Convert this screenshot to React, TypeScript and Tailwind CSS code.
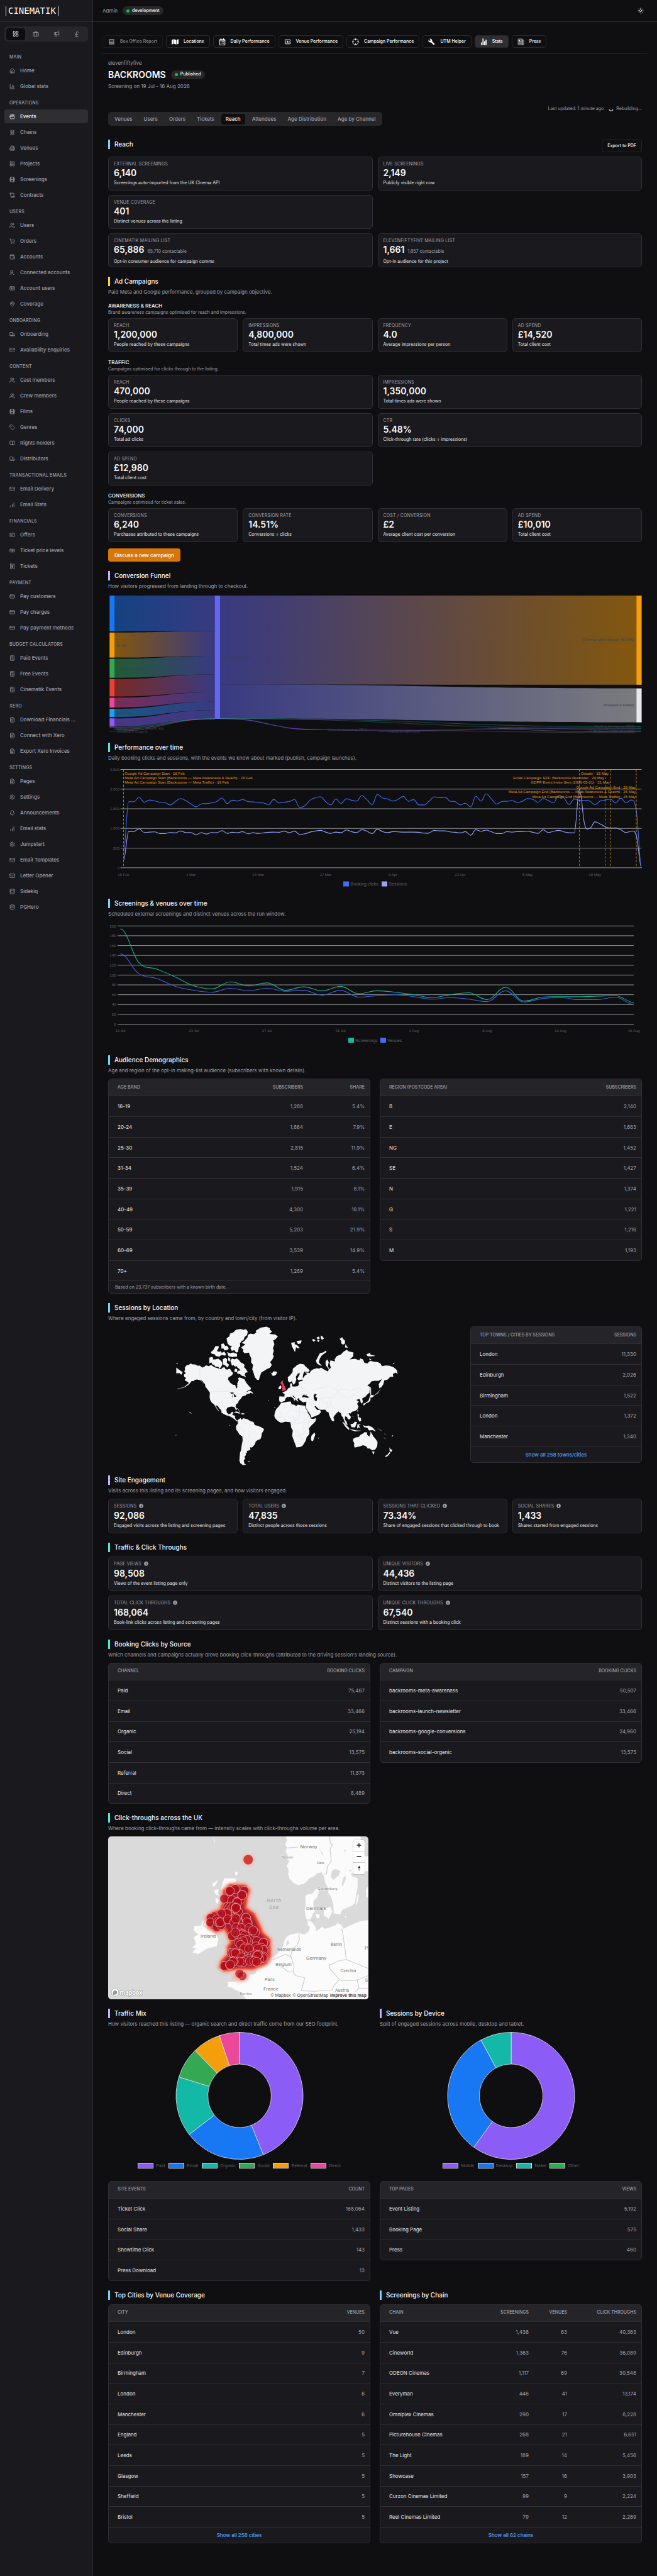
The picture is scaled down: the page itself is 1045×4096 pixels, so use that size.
import React from 'react'
import clsx from 'clsx'
import {
  Banknote, Bell, BookOpen, Briefcase, Building2, Calculator, ChartColumn, ChartNoAxesColumnIncreasing,
  Clapperboard, CreditCard, Crosshair, Database, FileText, Film, House, IdCard, Landmark, LayoutDashboard,
  LayoutGrid, Mail, MailCheck, MapPin, Megaphone, PoundSterling, Receipt, Scroll, Settings, ShoppingCart,
  Sun, Tag, TicketPercent, Truck, UserRoundCheck, Users, Wallet,
} from 'lucide-react'
import { FaInfoCircle, FaMap, FaRegCalendarAlt } from 'react-icons/fa'
import { IoNewspaperOutline, IoStatsChartSharp } from 'react-icons/io5'
import { MdBuild, MdOutlineLocalPlay, MdReceipt } from 'react-icons/md'

type Icon = React.ComponentType<{ className?: string }>

const NAV: { title: string, items: [string, Icon][] }[] = [
  { title: 'Main', items: [['Home', House], ['Global stats', ChartColumn]] },
  {
    title: 'Operations',
    items: [['Events', Clapperboard], ['Chains', Landmark], ['Venues', Building2], ['Projects', LayoutGrid], ['Screenings', Film], ['Contracts', Scroll]],
  },
  {
    title: 'Users',
    items: [['Users', Users], ['Orders', ShoppingCart], ['Accounts', Wallet], ['Connected accounts', UserRoundCheck], ['Account users', IdCard], ['Coverage', MapPin]],
  },
  { title: 'Onboarding', items: [['Onboarding', Truck], ['Availability Enquiries', MailCheck]] },
  {
    title: 'Content',
    items: [['Cast members', Users], ['Crew members', Users], ['Films', Film], ['Genres', Tag], ['Rights holders', BookOpen], ['Distributors', Truck]],
  },
  { title: 'Transactional emails', items: [['Email Delivery', Mail], ['Email Stats', ChartNoAxesColumnIncreasing]] },
  { title: 'Financials', items: [['Offers', TicketPercent], ['Ticket price levels', Banknote], ['Tickets', Receipt]] },
  { title: 'Payment', items: [['Pay customers', CreditCard], ['Pay charges', CreditCard], ['Pay payment methods', CreditCard]] },
  { title: 'Budget calculators', items: [['Paid Events', Calculator], ['Free Events', Calculator], ['Cinematik Events', Calculator]] },
  { title: 'Xero', items: [['Download Financials ...', FileText], ['Connect with Xero', FileText], ['Export Xero Invoices', FileText]] },
  {
    title: 'Settings',
    items: [['Pages', FileText], ['Settings', Settings], ['Announcements', Bell], ['Email stats', ChartNoAxesColumnIncreasing], ['Jumpstart', Settings], ['Email Templates', Mail], ['Letter Opener', Mail], ['Sidekiq', Database], ['PGHero', Database]],
  },
]

const SPACES: [string, Icon][] = [
  ['Dashboard', LayoutDashboard],
  ['Business', Briefcase],
  ['Marketing', Megaphone],
  ['Finance', PoundSterling],
]

const Sidebar = () => (
  <aside className="w-[148px] shrink-0 border-r border-[#2e2e33] bg-[#1a1a1e]">
    <div className="flex h-[35px] items-center gap-[3px] border-b border-[#2e2e33] pl-[9px]">
      <span className="h-[15px] w-px bg-zinc-100" />
      <span className="font-['DejaVu_Sans_Mono',monospace] text-[14px] leading-none text-zinc-50">CINEMATIK</span>
      <span className="h-[15px] w-px bg-zinc-100" />
    </div>
    <div className="mx-[7px] mt-[7px] flex h-[24px] items-center justify-between rounded-[5px] bg-[#27272a] p-[3px]">
      {SPACES.map(([name, Glyph], i) => (
        <button key={name} aria-label={name} className={clsx('flex h-[19px] w-[30px] items-center justify-center rounded-[4px]', i === 0 ? 'bg-[#0e0e10] text-zinc-50' : 'text-zinc-400')}>
          <Glyph className="size-[10px]" />
        </button>
      ))}
    </div>
    <nav className="px-[7px] pt-[19px]">
      {NAV.map((group) => (
        <div key={group.title} className="pb-[10px]">
          <h2 className="px-2 text-[7px] leading-[11px] font-medium tracking-wide text-zinc-400 uppercase">{group.title}</h2>
          <ul className="flex flex-col gap-[3px] pt-[5px]">
            {group.items.map(([label, Glyph]) => (
              <li key={label}>
                <a href="#" className={clsx('flex h-[22px] items-center gap-2 rounded-[4px] px-2 text-[8px] font-medium', label === 'Events' ? 'bg-[#2e2e33] text-zinc-100' : 'text-zinc-400')}>
                  <Glyph className="size-[9px] shrink-0" />
                  <span className="truncate">{label}</span>
                </a>
              </li>
            ))}
          </ul>
        </div>
      ))}
    </nav>
  </aside>
)

const Pill = ({ children }: { children: React.ReactNode }) => (
  <span className="flex h-[14px] items-center gap-1 rounded-full bg-[#27272a] px-[6px] text-[7px] font-medium text-zinc-50">
    <span className="size-[5px] rounded-full bg-green-500" />
    {children}
  </span>
)

const ACTIONS: [string, Icon][] = [
  ['Box Office Report', MdReceipt],
  ['Locations', FaMap],
  ['Daily Performance', FaRegCalendarAlt],
  ['Venue Performance', MdOutlineLocalPlay],
  ['Campaign Performance', Crosshair],
  ['UTM Helper', MdBuild],
  ['Stats', IoStatsChartSharp],
  ['Press', IoNewspaperOutline],
]

const TABS = ['Venues', 'Users', 'Orders', 'Tickets', 'Reach', 'Attendees', 'Age Distribution', 'Age by Channel']

const barColors = {
  sky: 'border-sky-300',
  amber: 'border-amber-300',
  violet: 'border-violet-300',
  teal: 'border-teal-300',
}

const Heading = ({ color, title, sub }: { color: keyof typeof barColors, title: string, sub?: string }) => (
  <div>
    <h2 className={clsx('border-l-[3px] pl-[7px] text-[10px] leading-[15px] font-medium text-zinc-50', barColors[color])}>{title}</h2>
    {sub && <p className="mt-[3px] text-[8px] leading-[12px] whitespace-nowrap text-zinc-400">{sub}</p>}
  </div>
)

const SubHeading = ({ title, sub }: { title: string, sub: string }) => (
  <div className="pt-[10px] pb-1">
    <h3 className="text-[8px] leading-[12px] font-medium text-zinc-50 uppercase">{title}</h3>
    <p className="text-[7px] leading-[10px] text-zinc-400">{sub}</p>
  </div>
)

type Stat = { label: string, value: string, note: string, extra?: string, info?: boolean }

const StatCard = ({ label, value, note, extra, info }: Stat) => (
  <div className={clsx('rounded-[5px] border border-[#2e2e33] bg-[#1a1a1e] px-2 pt-[6px]', info ? 'h-[55px]' : 'h-[54px]')}>
    <div className={clsx('flex items-center gap-1 text-[7px] tracking-wide text-zinc-400 uppercase', info ? 'leading-[10px]' : 'leading-[9px]')}>
      {label}
      {info && <FaInfoCircle className="size-[7px]" />}
    </div>
    <div className="flex items-baseline gap-[5px] leading-[20px]">
      <span className="text-[14px] font-semibold text-zinc-50">{value}</span>
      {extra && <span className="text-[7px] text-zinc-400">{extra}</span>}
    </div>
    <p className="text-[7px] leading-[11px] text-zinc-200">{note}</p>
  </div>
)

const Stats = ({ items, wide }: { items: Stat[], wide?: boolean }) => (
  <div className={clsx('grid gap-x-2 gap-y-[7px]', wide ? 'grid-cols-4' : 'grid-cols-2')}>
    {items.map((s) => <StatCard key={s.label} {...s} />)}
  </div>
)

// widths are for every column after the first
const DataTable = ({ head, rows, widths = [], note, more }: {
  head: string[],
  rows: (string | number)[][],
  widths?: string[],
  note?: string,
  more?: string,
}) => (
  <div className="self-start overflow-hidden rounded-[5px] border border-[#2e2e33] bg-[#1a1a1e]">
    <table className="w-full border-separate border-spacing-0">
      <thead>
        <tr className="h-[26px] bg-[#252529]">
          {head.map((h, i) => (
            <th key={h} scope="col" className={clsx('p-0 text-[7px] font-medium whitespace-nowrap text-zinc-400 uppercase', i ? 'pr-2 text-right' : 'pl-[14px] text-left', i && widths[i - 1])}>{h}</th>
          ))}
        </tr>
      </thead>
      <tbody className="text-[8px]">
        {rows.map((row, r) => (
          <tr key={r} className="h-[33px] nth-[3n]:h-[32px]">
            {row.map((cell, i) => (
              <td key={i} className={clsx('border-t border-[#2e2e33] p-0 whitespace-nowrap', i ? 'pr-2 text-right text-zinc-400' : 'pl-[14px] text-zinc-200')}>{cell}</td>
            ))}
          </tr>
        ))}
      </tbody>
    </table>
    {note && <p className="border-t border-[#2e2e33] pl-[10px] text-[7px] leading-[19px] text-zinc-400">{note}</p>}
    {more && (
      <button className="block h-[25px] w-full border-t border-[#2e2e33] text-center text-[8px] font-medium text-blue-400">{more}</button>
    )}
  </div>
)

/* ---------- charts ---------- */

const flowSources = [
  { label: 'Meta Ads', color: '#1877f2', y: 0, h: 56.7, ty: 0, th: 56.4 },
  { label: 'Email', color: '#f59e0b', y: 58.8, h: 39.8, ty: 56.4, th: 39.5 },
  { label: 'Google Organic', color: '#34a853', y: 100.6, h: 30.1, ty: 95.9, th: 29.7 },
  { label: 'Google Ads', color: '#ea4335', y: 132.7, h: 27.7, ty: 125.6, th: 28.4 },
  { label: 'Social', color: '#ec4899', y: 162.4, h: 15.6, ty: 154, th: 14.8 },
  { label: 'X/Twitter', color: '#1da1f2', y: 180, h: 13.2, ty: 168.8, th: 13.5 },
  { label: 'Direct', color: '#8b5cf6', y: 195.2, h: 13.2, ty: 182.3, th: 12.9 },
]

const ribbon = (x0: number, y0: number, h0: number, x1: number, y1: number, h1: number) => {
  const m = (x0 + x1) / 2
  return `M${x0} ${y0}C${m} ${y0} ${m} ${y1} ${x1} ${y1}V${y1 + h1}C${m} ${y1 + h1} ${m} ${y0 + h0} ${x0} ${y0 + h0}Z`
}

const FlowGradient = ({ id, from, to }: { id: string, from: string, to: string }) => (
  <linearGradient id={id} x1="0" x2="1" y1="0" y2="0">
    <stop offset="0" stopColor={from} />
    <stop offset="1" stopColor={to} />
  </linearGradient>
)

const FunnelChart = () => (
  <svg viewBox="0 0 849 219" className="mt-[9px] block w-full overflow-visible font-['Liberation_Sans',sans-serif] text-[6px]">
    <defs>
      {flowSources.map((s, i) => <FlowGradient key={s.label} id={`flow${i}`} from={s.color} to="#6366f1" />)}
      <FlowGradient id="flowExt" from="#6366f1" to="#f59e0b" />
      <FlowGradient id="flowDrop" from="#6366f1" to="#e5e7eb" />
    </defs>
    <g opacity="0.5">
      {flowSources.map((s, i) => <path key={s.label} d={ribbon(10.3, s.y, s.h, 169.5, s.ty, s.th)} fill={`url(#flow${i})`} />)}
      <path d={ribbon(178, 0, 141.4, 840, 0, 141.8)} fill="url(#flowExt)" />
      <path d={ribbon(178, 141.2, 54, 840, 147.6, 54)} fill="url(#flowDrop)" />
    </g>
    <g fill="none" strokeOpacity="0.6" strokeWidth="0.7">
      <path d="M10 209.5C90 209.5 90 195.6 170 195.6" stroke="#0ea5e9" />
      <path d="M10 211C90 211 90 195.8 170 195.8" stroke="#14b8a6" />
      <path d="M10 213C90 213 90 196 170 196" stroke="#a1a1aa" />
      <path d="M10 215.5C90 215.5 90 196.2 170 196.2" stroke="#ec4899" />
      <path d="M178 195.6C260 195.6 250 213.4 340 213.4" stroke="#8b5cf6" strokeWidth="1.3" />
      <path d="M178 195.5C540 195.5 500 208.5 840 208.5" stroke="#14b8a6" />
      <path d="M178 195.7C480 195.7 460 211.5 840 211.5" stroke="#64748b" />
      <path d="M340 213.4C560 213.4 620 218 840 218" stroke="#71717a" />
      <path d="M340 213.4C480 217 520 213 620 211.5S760 214 848 214" stroke="#8b5cf6" />
      <path d="M430 216.5C560 216.5 640 209 848 209" stroke="#52525b" />
      <path d="M620 211C700 216 760 216.5 848 216.5" stroke="#a1a1aa" />
      <path d="M2 209.5H10M840 208.5H848" stroke="#14b8a6" />
      <path d="M2 215.5H10M840 211.5H848" stroke="#10b981" />
    </g>
    {flowSources.map((s) => <rect key={s.label} x="2.3" y={s.y} width="8" height={s.h} fill={s.color} />)}
    <rect x="169.5" y="0" width="8.5" height="196" fill="#6366f1" />
    <rect x="840.2" y="0" width="8.4" height="141.8" fill="#f59e0b" />
    <rect x="840.2" y="147.6" width="8.4" height="54" fill="#e5e7eb" />
    <g fill="#374151">
      {flowSources.map((s) => <text key={s.label} x="14" y={s.y + s.h / 2 + 2}>{s.label}</text>)}
      <text x="14" y="213">elevenfiftyfive.cinematik.app</text>
      <text x="14" y="215">Newsletter</text>
      <text x="14" y="218">Instagram Organic</text>
      <text x="182" y="100">Landed (92,086)</text>
      <text x="349" y="215">Viewed screening (364)</text>
      <text x="445" y="217.5">Added to cart (189)</text>
      <text x="604" y="212.5">Created account (351)</text>
      <g textAnchor="end">
        <text x="837" y="72">External click-through (67,540)</text>
        <text x="837" y="176">Dropped (Landed)</text>
        <text x="837" y="210">Mailing list signup (313)</text>
        <text x="837" y="216">Dropped (Created account)</text>
        <text x="837" y="218">Dropped (Added to cart)</text>
      </g>
    </g>
  </svg>
)

// cubic smoothing through the points
const smooth = (pts: [number, number][]) => {
  let d = `M${pts[0][0].toFixed(1)} ${pts[0][1].toFixed(1)}`
  for (let i = 0; i < pts.length - 1; i++) {
    const p0 = pts[i - 1] ?? pts[i]
    const p1 = pts[i]
    const p2 = pts[i + 1]
    const p3 = pts[i + 2] ?? p2
    const flat1 = (p1[1] - p0[1]) * (p2[1] - p1[1]) <= 0
    const flat2 = (p2[1] - p1[1]) * (p3[1] - p2[1]) <= 0
    const dx = (p2[0] - p1[0]) * 0.38
    const m1 = flat1 ? 0 : ((p2[1] - p0[1]) / (p2[0] - p0[0])) * dx
    const m2 = flat2 ? 0 : ((p3[1] - p1[1]) / (p3[0] - p1[0])) * dx
    d += `C${(p1[0] + dx).toFixed(1)} ${(p1[1] + m1).toFixed(1)} ${(p2[0] - dx).toFixed(1)} ${(p2[1] - m2).toFixed(1)} ${p2[0].toFixed(1)} ${p2[1].toFixed(1)}`
  }
  return d
}

// one value per day from 16 Feb, 463 units = 2,500
const bookingClicks = [
  75, 311, 311, 332, 309, 319, 315, 309, 307, 296, 312, 326, 316, 301, 287, 301, 302, 306, 312, 329, 302, 318, 314, 321, 312,
  310, 306, 305, 298, 322, 305, 309, 312, 321, 284, 292, 318, 330, 334, 312, 296, 324, 303, 325, 318, 314, 340, 320, 298, 345,
  329, 324, 314, 323, 336, 313, 321, 296, 296, 314, 334, 330, 333, 314, 312, 296, 304, 286, 337, 314, 348, 325, 300, 312, 313,
  317, 307, 313, 326, 322, 308, 326, 316, 306, 341, 329, 298, 323, 318, 317, 314, 297, 314, 319, 323, 305, 328, 306, 319, 264, 0,
]
const sessions = [
  36, 171, 171, 184, 166, 168, 169, 161, 161, 166, 164, 173, 166, 166, 156, 165, 159, 166, 165, 175, 162, 167, 165, 170, 160,
  165, 162, 164, 167, 168, 167, 173, 165, 173, 157, 160, 168, 173, 176, 168, 162, 168, 165, 178, 170, 166, 179, 172, 161, 182,
  170, 166, 170, 169, 168, 168, 168, 167, 163, 164, 176, 174, 174, 169, 167, 164, 170, 153, 179, 172, 177, 170, 161, 161, 170,
  168, 170, 170, 172, 167, 162, 179, 166, 172, 176, 169, 165, 164, 369, 204, 186, 216, 206, 193, 187, 188, 179, 166, 172, 149, 0,
]

const dayPath = (data: number[]) => smooth(data.map((v, i) => [24.5 + i * 8.24, 168.8 - v * 0.3376]))

const startNotes = [
  'Google Ad Campaign Start · 16 Feb',
  'Meta Ad Campaign Start (Backrooms — Meta Awareness & Reach) · 16 Feb',
  'Meta Ad Campaign Start (Backrooms — Meta Traffic) · 16 Feb',
]
const endNotes: [string, number][] = [
  ['Onsale · 15 May', 796],
  ['Email Campaign: EFF: Backrooms Reminder · 20 May', 789],
  ['GDPR Event Invite Sent (2026-05-21) · 21 May', 798],
  ['Google Ad Campaign End · 26 May', 839],
  ['Meta Ad Campaign End (Backrooms — Meta Awareness & Reach) · 26 May', 839],
  ['Meta Ad Campaign End (Backrooms — Meta Traffic) · 26 May', 839],
]

const PerformanceChart = () => (
  <svg viewBox="0 0 849 203" className="block w-full font-['Liberation_Sans',sans-serif] text-[6px]">
    {['2,500', '2,000', '1,500', '1,000', '500', '0'].map((t, i) => (
      <g key={t}>
        <text x="18" y={14.7 + i * 31.26} textAnchor="end" fill="#5f5f5f">{t}</text>
        <path d={`M19.5 ${12.5 + i * 31.26}H848.5`} stroke="#b4b6ba" strokeWidth="0.8" />
      </g>
    ))}
    <path d={dayPath(sessions)} fill="none" stroke="#94a3fb" strokeWidth="1.1" />
    <path d={dayPath(bookingClicks)} fill="none" stroke="#3f6df3" strokeWidth="1.1" />
    {[24.5, 749.6, 790.6, 799, 840].map((x) => (
      <path key={x} d={`M${x} 12.5V168.8`} stroke="#d99a14" strokeWidth="0.8" strokeDasharray="3.5 2.5" />
    ))}
    <g fill="#e29410">
      {startNotes.map((t, i) => <text key={t} x="26.3" y={20.5 + i * 7.4}>{t}</text>)}
      {endNotes.map(([t, x], i) => <text key={t} x={x} y={20.5 + i * 7.4} textAnchor="end">{t}</text>)}
    </g>
    <g fill="#5f5f5f" textAnchor="middle">
      {['16 Feb', '1 Mar', '14 Mar', '27 Mar', '9 Apr', '22 Apr', '5 May', '18 May'].map((t, i) => (
        <text key={t} x={24.5 + i * 107.1} y="181.5">{t}</text>
      ))}
    </g>
    <rect x="374" y="190.5" width="9" height="8" fill="#3f6df3" />
    <rect x="435" y="190.5" width="9" height="8" fill="#94a3fb" />
    <g fill="#5f5f5f" className="text-[7px]">
      <text x="385.5" y="197">Booking clicks</text>
      <text x="446.5" y="197">Sessions</text>
    </g>
  </svg>
)

const screeningsByDay = [194, 126, 112, 96, 78, 72, 86, 78, 84, 69, 76, 68, 77, 62, 68, 65, 60, 54, 60, 64, 50, 75, 47, 55, 56, 56, 57, 58, 44]
const venuesByDay = [143, 103, 93, 77, 69, 65, 73, 68, 73, 67, 69, 59, 69, 55, 58, 60, 56, 51, 54, 51, 46, 68, 45, 52, 54, 50, 50, 55, 40]
const runPath = (data: number[]) => smooth(data.map((v, i) => [19.4 + i * 29.17, 169.5 - v * 0.781]))

const ScreeningsChart = () => (
  <svg viewBox="0 0 849 204" className="block w-full font-['Liberation_Sans',sans-serif] text-[6px]">
    {Array.from({ length: 11 }, (_, i) => (
      <g key={i}>
        <text x="12.6" y={15.5 + i * 15.62} textAnchor="end" fill="#5f5f5f">{200 - i * 20}</text>
        <path d={`M15 ${13.3 + i * 15.62}H836`} stroke="#b4b6ba" strokeWidth="0.8" />
      </g>
    ))}
    <path d={runPath(venuesByDay)} fill="none" stroke="#3f5fdc" strokeWidth="1.1" />
    <path d={runPath(screeningsByDay)} fill="none" stroke="#14b392" strokeWidth="1.1" />
    <g fill="#5f5f5f" textAnchor="middle">
      {['19 Jul', '23 Jul', '27 Jul', '31 Jul', '4 Aug', '8 Aug', '12 Aug', '16 Aug'].map((t, i) => (
        <text key={t} x={19.4 + i * 116.7} y="182">{t}</text>
      ))}
    </g>
    <rect x="382" y="191" width="9" height="8" fill="#14b8a6" />
    <rect x="433" y="191" width="9" height="8" fill="#3f6df3" />
    <g fill="#5f5f5f" className="text-[7px]">
      <text x="393.5" y="197.5">Screenings</text>
      <text x="444" y="197.5">Venues</text>
    </g>
  </svg>
)

const palette = ['#8b5cf6', '#1877f2', '#14b8a6', '#34a853', '#f59e0b', '#ec4899']
const swatches = ['bg-[#8b5cf6]', 'bg-[#1877f2]', 'bg-[#14b8a6]', 'bg-[#34a853]', 'bg-[#f59e0b]', 'bg-[#ec4899]']

// ends: the angle in degrees at which every slice stops
const Donut = ({ ends, labels }: { ends: number[], labels: string[] }) => {
  const at = (deg: number, r: number) => {
    const a = (deg * Math.PI) / 180
    return `${(102 + r * Math.sin(a)).toFixed(2)} ${(101.5 - r * Math.cos(a)).toFixed(2)}`
  }
  return (
    <div className="mt-[7px] flex flex-col items-center">
      <svg viewBox="0 0 204 203" className="w-[204px]">
        {ends.map((end, i) => {
          const start = ends[i - 1] ?? 0
          const big = end - start > 180 ? 1 : 0
          return (
            <path
              key={end}
              d={`M${at(start, 101)}A101 101 0 ${big} 1 ${at(end, 101)}L${at(end, 50.5)}A50.5 50.5 0 ${big} 0 ${at(start, 50.5)}Z`}
              fill={palette[i]}
              stroke="#e6e6ea"
              strokeWidth="0.8"
            />
          )
        })}
      </svg>
      <ul className="mt-1 flex gap-[6px] font-['Liberation_Sans',sans-serif] text-[7px] leading-[11px] text-[#5f5f5f]">
        {labels.map((l, i) => (
          <li key={l} className="flex items-center gap-1">
            <span className={clsx('h-[9px] w-[25px] border border-zinc-300', swatches[i])} />
            {l}
          </li>
        ))}
      </ul>
    </div>
  )
}

/* ---------- maps ---------- */

const land = [
  // north america
  'M80 318L95 300 104 302 120 290 134 296 150 297 168 305 184 305 200 318 212 314 225 303 245 308 262 300 276 312 290 318 315 325 328 330 340 318 352 316 360 330 372 332 385 325 396 334 400 345 412 356 402 372 380 385 376 398 384 412 395 425 412 436 425 436 430 452 434 462 440 452 438 428 450 405 445 392 452 386 470 390 490 400 500 420 515 440 530 455 535 465 510 478 495 490 512 482 525 476 535 480 548 492 545 497 532 490 520 498 505 500 498 508 475 515 465 530 450 545 445 560 430 572 428 585 437 605 432 612 420 588 400 585 385 588 372 592 365 605 368 625 380 638 395 632 402 622 412 620 410 632 405 642 425 648 424 660 430 674 440 680 436 686 415 668 395 655 380 648 365 645 345 635 330 625 332 614 318 598 306 582 290 575 300 595 318 618 308 612 294 592 282 572 262 555 254 540 250 520 252 490 238 470 222 450 218 430 208 420 200 408 190 405 165 400 150 402 138 412 128 410 110 432 84 450 66 458 82 446 108 425 98 414 85 410 80 400 90 390 76 380 74 366 88 356 76 346 82 334Z',
  // arctic islands
  'M248 250L262 246 275 250 272 262 290 262 310 258 325 268 338 285 336 302 320 325 310 314 290 312 280 300 268 295 262 282 248 290Z',
  'M392 268L404 256 420 262 436 256 450 265 465 285 476 288 490 300 486 316 500 330 512 350 498 352 490 364 500 385 488 378 470 374 458 362 440 360 438 348 446 340 462 338 452 326 440 318 438 308 425 312 412 300 404 306 398 290Z',
  'M366 118L385 105 390 85 412 78 430 60 462 54 480 60 500 55 512 72 506 96 490 108 484 128 468 138 458 152 460 172 450 180 445 212 430 215 420 198 402 204 392 182 404 172 384 166 372 150Z',
  'M258 212L275 198 290 172 312 170 312 184 300 205 316 210 325 205 334 218 350 208 362 225 358 236 330 232 316 244 292 238 284 226 266 224Z',
  'M330 158L344 152 358 170 368 168 382 186 372 198 350 200 344 186 332 190Z',
  'M370 212L392 220 412 215 438 224 438 243 404 246 380 240Z',
  'M340 262L358 250 370 262 368 285 384 300 372 318 358 304 344 298Z',
  'M425 326L440 330 436 350 418 345Z', 'M378 248L392 256 388 278 376 268Z',
  'M466 180L495 160 470 148 486 138 510 110 512 94 530 85 552 90 570 78 566 66 600 45 640 38 662 48 664 60 678 72 660 88 700 92 718 105 700 125 686 132 694 160 684 184 690 205 682 226 690 240 680 262 665 280 676 300 665 318 640 330 625 340 604 352 594 380 588 402 575 402 560 384 550 350 542 330 548 300 534 282 536 256 524 232 520 216 490 220 478 208 482 196Z',
  'M666 352L680 356 686 344 706 345 712 354 705 366 690 376 674 370 678 362Z',
  // south america
  'M440 680L450 672 462 664 470 676 480 665 510 672 528 684 550 690 560 712 578 716 600 725 622 738 620 750 608 768 605 790 598 808 580 814 566 824 562 840 548 858 538 866 526 864 530 882 505 890 506 902 496 906 500 915 488 930 494 940 484 955 488 974 500 982 480 986 462 974 454 955 456 930 458 904 466 880 470 850 476 820 475 790 455 776 444 758 432 742 430 722 436 712 444 700Z',
  // africa
  'M740 560L760 557 785 552 805 550 812 570 828 572 845 582 852 572 880 576 905 580 905 592 918 612 924 630 935 645 945 668 962 670 980 662 976 684 962 700 945 716 930 735 934 755 932 775 914 796 910 815 900 832 885 855 870 862 845 865 838 848 826 815 815 785 820 750 808 728 806 708 802 692 784 690 770 688 752 694 735 695 715 682 698 664 693 648 698 620 708 600 724 584Z',
  'M968 762L974 775 966 800 958 822 948 820 944 806 948 784Z',
  // eurasia
  'M728 515L745 516 762 517 764 500 748 490 760 484 778 475 790 458 803 455 800 436 808 424 816 432 814 446 832 448 855 445 862 432 858 418 872 412 888 408 885 400 890 390 905 370 918 364 905 350 935 356 945 340 960 330 985 322 1000 326 1012 318 1040 335 1062 345 1066 328 1045 302 1044 276 1056 262 1066 280 1060 310 1072 330 1080 318 1072 290 1078 268 1090 272 1110 276 1106 262 1120 240 1150 228 1166 210 1190 195 1200 206 1235 215 1234 240 1210 262 1245 258 1275 268 1282 256 1300 262 1310 285 1330 290 1350 272 1375 278 1400 280 1420 290 1430 308 1455 304 1480 305 1510 316 1532 335 1538 362 1524 352 1505 362 1508 382 1488 380 1470 400 1446 406 1440 432 1426 452 1412 460 1408 432 1430 398 1415 404 1405 410 1385 408 1360 412 1345 430 1330 440 1348 450 1345 490 1332 500 1320 515 1295 530 1300 555 1288 565 1282 545 1276 532 1255 540 1272 552 1260 566 1270 585 1262 604 1245 616 1225 620 1216 632 1202 630 1206 642 1218 655 1212 672 1198 672 1190 656 1178 652 1176 672 1188 690 1195 712 1182 706 1172 682 1162 656 1155 652 1150 632 1132 618 1118 632 1106 646 1098 658 1104 684 1096 686 1086 680 1076 660 1068 640 1064 624 1054 622 1042 606 1010 608 995 600 976 582 968 584 978 598 988 610 1004 606 1014 622 998 640 970 652 948 660 940 640 922 614 908 590 912 570 912 552 892 556 878 548 864 536 862 526 850 534 858 550 848 548 836 526 822 510 816 506 824 520 842 534 830 546 826 532 806 516 790 520 782 518 770 530 765 546 750 552 742 556 728 550 726 532Z',
  'M785 385L800 372 818 350 820 325 836 314 850 300 872 292 896 296 905 308 935 335 928 350 900 345 892 360 888 384 892 398 860 405 850 396 858 380 870 358 856 358 840 382 844 400 836 425 824 435 812 412 798 420 788 412Z',
  'M722 466L724 450 738 440 742 452 736 466Z',
  'M985 290L978 272 992 245 1005 220 1030 214 1045 203 1052 210 1018 235 1004 258 998 282 1020 308 1000 300Z',
  'M808 148L835 145 832 158 850 165 868 185 852 186 842 178 835 212 822 188 814 174Z', 'M845 136L880 132 876 152 856 158Z',
  'M950 128L965 122 975 134 962 140ZM982 112L1000 106 1004 120 990 126ZM1010 98L1022 104 1034 120 1018 128 1012 116ZM985 132L1004 130 996 144Z',
  'M1140 122L1158 110 1166 124 1176 132 1178 152 1164 162 1150 150 1152 136ZM1180 158L1198 182 1178 180Z',
  'M1324 226L1350 218 1352 230 1388 238 1350 242 1332 240ZM1342 254L1358 262 1348 268Z',
  // asia pacific
  'M1350 508L1362 504 1378 512 1362 524 1352 524 1352 542 1340 556 1322 562 1306 578 1300 566 1318 560 1338 545 1344 528Z',
  'M1350 446L1356 462 1356 505 1350 504Z', 'M1262 606L1268 610 1264 626Z',
  'M1262 636L1274 640 1270 656 1286 664 1288 684 1276 688 1266 670Z',
  'M1214 706L1232 702 1246 688 1260 692 1252 712 1246 728 1222 726Z',
  'M1158 688L1172 696 1190 716 1208 736 1202 744 1182 726Z', 'M1204 742L1230 742 1256 748 1290 750 1250 755Z',
  'M1262 708L1286 704 1272 714 1284 736 1270 726 1260 738Z',
  'M1300 712L1318 718 1340 715 1366 728 1390 756 1366 746 1342 748 1330 730 1308 726Z',
  'M1234 806L1252 796 1270 794 1284 778 1300 770 1310 760 1330 762 1328 776 1344 790 1350 778 1353 756 1362 772 1372 790 1386 806 1400 828 1398 856 1384 880 1364 884 1342 870 1334 874 1322 856 1300 850 1278 858 1244 866 1238 848 1242 838 1232 820Z',
  'M1362 893L1380 894 1372 914Z',
  'M1480 864L1488 876 1502 882 1494 896 1484 892ZM1482 896L1488 902 1474 920 1458 932 1452 924 1468 914Z',
  'M415 624L434 618 450 624 462 632 448 632ZM464 632L480 630 494 636 474 640Z',
  'M22 318L40 332 66 350 56 368 44 356 22 358ZM22 288L34 290 26 296ZM1504 288L1518 290 1508 295Z',
  'M512 958L528 960 520 966ZM108 618L120 626 128 634 118 630ZM386 710L392 714 388 718ZM16 780L24 780 20 784ZM1396 732L1420 744 1436 756 1424 750ZM1446 768L1458 780 1452 778ZM1440 796L1456 804 1450 804ZM1496 786L1508 780 1502 792Z',
  'M648 540L656 542 650 545ZM692 590L700 592 694 596ZM990 800L1002 798 996 804ZM1360 520L1400 490 1424 462 1402 494Z',
]

const borders = 'M184 305V403L215 430M255 481H385L412 492 432 510 470 500 492 485M290 575L330 578 365 604M742 560L720 600 745 640 740 655M760 557L770 585 745 605M805 550L806 605 780 635M812 600L866 625V578M866 625L860 668 822 690M866 625H920M775 640L800 660 828 655M700 656H742L760 665 765 690M828 655L820 692 860 700 890 695 905 670 935 645M890 695L930 700 925 735M820 750L855 756 860 785 900 770 932 770M835 830L870 840 880 800 905 815M820 790H880L900 760 890 730 905 700M920 680L975 684M478 672L490 700 530 705 560 712M430 720L460 725 480 745 478 790 510 810 540 855M480 745L510 765 530 810M475 790L490 845 475 930M820 350V425M852 300L868 358M888 372L872 320M778 475L800 490 805 515M800 455L820 475 855 480 880 455 880 430M820 475L830 505 860 505 885 500M855 480L862 505M880 455L910 470 930 490M880 430L860 445M912 552L945 555 950 580 990 610M930 525L960 545 965 570M960 545L1000 550 1005 600M960 480L990 460 1045 455 1060 440 1090 455 1130 475 1115 500 1090 525 1060 520 1010 530 980 520M1010 530L1030 555 1060 560 1050 605M1060 520L1080 545 1075 570 1110 600 1150 610 1165 595M1130 475L1160 465 1210 475 1255 465 1275 452 1300 475 1320 490 1300 520M1130 475L1150 510 1200 525 1250 500 1275 480M1165 595L1165 640M1180 610L1195 640 1210 645M1075 570L1060 600'

const WorldMap = () => (
  <svg viewBox="16 36 1524 954" className="w-[354px]">
    {land.map((d, i) => <path key={i} d={d} fill="#f3f4f6" />)}
    <path d="M882 522L888 508 900 502 902 512 914 502 912 512 935 520 918 526 900 520ZM962 508L972 498 984 502 974 516 986 526 984 546 972 546 964 528ZM390 490L412 486 416 494 402 498ZM404 500L408 522 404 520ZM414 498L420 520 434 516 420 500ZM384 400L396 384 420 378 412 360 430 356 440 372 438 410 440 436 420 436 394 424Z" fill="#0f0f11" />
    <path d={borders} fill="none" stroke="#dadde1" strokeWidth="2" />
    <path d="M30 464L48 462M52 460L74 452M428 600L442 598 450 610 455 622M1230 650L1232 655" stroke="#f3f4f6" strokeWidth="3" fill="none" />
    <path d="M738 416L748 408 754 412 750 420 757 430 760 442 766 450 768 460 774 462 770 474 756 476 742 479 750 470 744 462 750 456 744 448 750 442 742 434 736 428ZM758 402L762 400 760 406Z" fill="#e8425c" />
  </svg>
)

const hits: [number, number][] = [
  [764, 393], [818, 405], [699, 459], [730, 407], [733, 405], [745, 470], [795, 465], [806, 432], [804, 435], [773, 482], [776, 485],
  [718, 515], [728, 520], [735, 512], [745, 525], [752, 512], [780, 545], [765, 522], [770, 520], [768, 523], [718, 558], [714, 560], [682, 562],
  [640, 580], [620, 590], [655, 600], [618, 622], [655, 652], [662, 618], [680, 640], [672, 622], [677, 620], [720, 600], [765, 590], [762, 615],
  [757, 620], [768, 597], [825, 590], [830, 595], [828, 588], [838, 625], [832, 620], [770, 655], [800, 660], [845, 660], [745, 715], [870, 680],
  [880, 690], [868, 676], [790, 690], [780, 705], [800, 698], [803, 704], [820, 710], [765, 690], [830, 740], [803, 732], [810, 750], [785, 760],
  [795, 775], [820, 792], [815, 800], [890, 750], [885, 785], [942, 765], [930, 762], [928, 760], [920, 795], [930, 810], [898, 800], [845, 800],
  [740, 830], [748, 828], [755, 836], [792, 838], [785, 840], [768, 835], [765, 832], [800, 860], [860, 850], [880, 840], [890, 850], [915, 850],
  [930, 855], [925, 865], [905, 870], [895, 845], [900, 843], [893, 848], [840, 870], [825, 880], [810, 892], [790, 890], [850, 885], [875, 885],
  [890, 890], [755, 885], [750, 890], [697, 918], [702, 920], [732, 912], [735, 910], [805, 987], [789, 972],
]

const places: [string, number, number, string][] = [
  ['Norway', 319, 18.5, 'text-[8px]'], ['Bergen', 285, 35, 'text-[6px] opacity-70'], ['Oslo', 338, 44, 'text-[6px]'],
  ['Gothenburg', 349, 85, 'text-[6px] opacity-80'], ['Denmark', 331, 117, 'text-[8px]'], ['Ireland', 159, 161, 'text-[8px]'],
  ['Berlin', 363, 173.5, 'text-[7px]'], ['Netherlands', 288, 182, 'text-[7px]'], ['Germany', 331, 195.5, 'text-[8px]'],
  ['Belgium', 279, 205.5, 'text-[7px]'], ['Czechia', 382, 215.5, 'text-[7px]'], ['Paris', 257, 229.5, 'text-[7px]'],
  ['France', 259, 244.5, 'text-[8px]'], ['Nantes', 219, 252, 'text-[6px] opacity-70'], ['Austria', 372, 247, 'text-[7px]'],
]

const heat = 'M735 368L820 372 842 405 828 450 820 525 870 565 895 625 920 695 962 740 964 850 940 900 865 935 780 935 700 948 678 925 690 885 725 842 725 790 745 760 725 700 705 660 650 680 610 645 602 590 630 560 680 540 698 480 700 405Z'

const UkMap = () => (
  <div className="relative mt-[7px] w-[414px] max-w-full overflow-hidden rounded-[5px]">
    <svg viewBox="0 0 414 259" className="block w-full bg-[#dadada] font-['Roboto',sans-serif]">
      <defs>
        <filter id="soft" x="-20%" y="-20%" width="140%" height="140%"><feGaussianBlur stdDeviation="9" /></filter>
        <filter id="edge" x="-20%" y="-20%" width="140%" height="140%"><feGaussianBlur stdDeviation="4" /></filter>
      </defs>
      <g transform="scale(.271 .2325) translate(-18 -33)">
        <g fill="#fbfbfb">
          <path d="M1060 33L1068 60 1058 85 1066 110 1060 140 1072 160 1070 190 1082 200 1066 235 1078 262 1074 290 1084 325 1110 355 1135 366 1165 358 1185 340 1200 318 1225 308 1245 285 1270 278 1285 305 1292 350 1312 390 1310 420 1328 450 1340 500 1342 560 1380 565 1392 535 1440 512 1465 492 1472 440 1482 380 1482 318 1450 305 1440 285 1545 270V170H1524L1500 150 1500 33Z" />
          <path d="M1175 442L1190 430 1215 425 1235 395 1250 388 1255 410 1245 450 1225 470 1222 500 1232 540 1216 572 1205 604 1188 605 1178 590 1172 540 1178 490ZM1236 562L1260 568 1256 596 1240 588ZM1284 532L1322 512 1334 548 1312 596 1284 572ZM1405 576L1418 582 1412 592ZM1478 440L1490 425 1484 480 1470 508ZM1530 400L1545 370V450H1534Z" />
          <path d="M1545 605L1500 612 1440 640 1400 665 1388 640 1365 625 1352 642 1320 655 1290 665 1275 650 1240 682 1232 645 1204 606 1188 605 1190 640 1202 655 1196 682 1170 705 1138 692 1085 705 1062 725 1050 755 1042 790 1010 840 978 862 975 890 958 910 895 945 880 975 845 978 836 1012 790 1010 770 1025 716 1028 724 1044 716 1058 745 1068 768 1085 800 1100 814 1125 830 1147H1545Z" />
          <path d="M525 645L560 645 575 612 600 600 645 690 666 735 655 785 600 800 545 838 512 826 535 800 512 792 534 768 520 722 548 704 520 676Z" />
          <path d="M700 320L770 320 766 342 740 362 745 400 690 440 680 395 690 350ZM628 358L660 332 652 362 636 378ZM640 400L668 395 662 420 672 440 645 426ZM762 280L776 272 780 290 766 302ZM845 152L852 136 850 158ZM636 40L644 66 640 82ZM650 450L668 470 662 496 648 480Z" />
        </g>
        <path d="M1330 270L1350 256 1382 270 1372 300 1340 330 1325 312ZM1395 320L1410 302 1414 320 1396 372 1390 370ZM1398 126L1416 128 1408 138ZM1260 120L1275 145 1282 165 1274 160ZM1072 110L1090 112 1075 116ZM1065 755L1075 740 1080 768 1062 782ZM1430 266L1450 264 1440 274Z" fill="#dadada" />
        <path d="M1318 33L1322 80 1336 90 1320 120 1328 200 1304 240 1300 290 1284 290M1060 112L1132 106M1190 605L1230 606M1138 692L1140 740 1126 780 1100 800 1090 850 1110 925 1104 960M980 878L1060 840 1095 860M1030 925L1050 935 1075 960 1104 960 1118 985 1172 1000 1152 1088 1180 1090 1230 1092 1330 1085 1340 1060 1375 1010 1320 940 1316 915 1370 885 1416 875 1404 770 1395 690 1388 665M1416 875L1470 900 1520 925 1545 935M1375 1015L1420 1020 1480 1015 1545 985M1480 1015L1490 1070 1470 1095 1460 1110 1400 1120 1340 1100M1490 1070L1545 1075M585 610L575 640 620 680" fill="none" stroke="#c9c9c9" strokeWidth="4" />
        <path d={heat} fill="#fb8c72" stroke="#fb8c72" strokeWidth="34" strokeLinejoin="round" filter="url(#soft)" />
        <ellipse cx="840" cy="192" rx="34" ry="38" fill="#fbb4a0" filter="url(#soft)" />
        <ellipse cx="797" cy="980" rx="48" ry="50" fill="#fbb4a0" filter="url(#soft)" />
        <path d={heat} fill="#a91f30" stroke="#e2402f" strokeWidth="14" strokeLinejoin="round" filter="url(#edge)" />
        <ellipse cx="840" cy="192" rx="28" ry="33" fill="#cf3f37" />
        {hits.map(([x, y], i) => (
          <ellipse key={i} cx={x} cy={y} rx="26" ry="31" fill="#b00d19" fillOpacity="0.72" stroke="#fde0de" strokeOpacity="0.8" strokeWidth="2.5" />
        ))}
      </g>
      <g fill="#767676" textAnchor="middle" stroke="#fff" strokeWidth="1" strokeOpacity="0.6" paintOrder="stroke">
        {places.map(([t, x, y, cls]) => <text key={t} x={x} y={y} className={cls}>{t}</text>)}
      </g>
      <g fill="#767676" textAnchor="end">
        <text x="413" y="179.5" className="text-[8px]">P</text>
        <text x="413" y="231" className="text-[7px]">S</text>
      </g>
      <g fill="#a0a0a0" textAnchor="middle" className="text-[8px] tracking-widest italic">
        <text x="264" y="104">North</text>
        <text x="264" y="115">Sea</text>
      </g>
      <g stroke="#8f8f8f" strokeWidth="0.6" fill="#fff">
        <circle cx="11" cy="248" r="6" />
        <path d="M8 251.500C7 247 9.500 244.500 12 245.200 14.500 246 14.800 248.800 13.200 250.200 12 251.300 10 251.800 8 251.500Z" fill="#9a9a9a" />
      </g>
      <text x="18.500" y="251.500" className="text-[10px] font-bold" fill="#fff" stroke="#8f8f8f" strokeWidth="1" paintOrder="stroke">mapbox</text>
    </svg>
    <div className="absolute top-[6px] right-[6px] flex w-[18px] flex-col divide-y divide-zinc-300 rounded-[3px] bg-white ring-1 ring-black/10">
      <button aria-label="Zoom in" className="flex h-[18px] items-center justify-center">
        <svg viewBox="0 0 8 8" className="size-[8px]"><path d="M4 1V7M1 4H7" stroke="#222" strokeWidth="1.4" strokeLinecap="round" /></svg>
      </button>
      <button aria-label="Zoom out" className="flex h-[18px] items-center justify-center">
        <svg viewBox="0 0 8 8" className="size-[8px]"><path d="M1 4H7" stroke="#222" strokeWidth="1.4" strokeLinecap="round" /></svg>
      </button>
      <button aria-label="Reset north" className="flex h-[18px] items-center justify-center">
        <svg viewBox="0 0 8 12" className="h-[10px]"><path d="M1.500 5.500L4 0.500 6.500 5.500Z" fill="#222" /><path d="M1.500 6.500L4 11.500 6.500 6.500Z" fill="#bbb" /></svg>
      </button>
    </div>
    <div className="absolute right-0 bottom-0 flex gap-[3px] bg-white/50 px-[3px] font-['Liberation_Sans',sans-serif] text-[7px] leading-[12px] text-zinc-700">
      <a href="#">© Mapbox</a>
      <a href="#">© OpenStreetMap</a>
      <a href="#" className="font-bold">Improve this map</a>
    </div>
  </div>
)

const Reach = () => (
  <div className="flex flex-col gap-[15px]">
    <section>
      <div className="mb-[7px] flex h-[20px] items-start justify-between">
        <Heading color="sky" title="Reach" />
        <button className="h-[20px] rounded-[4px] border border-[#27272a] px-2 text-[7px] font-medium text-zinc-50">Export to PDF</button>
      </div>
      <Stats items={[
        { label: 'External screenings', value: '6,140', note: 'Screenings auto-imported from the UK Cinema API' },
        { label: 'Live screenings', value: '2,149', note: 'Publicly visible right now' },
        { label: 'Venue coverage', value: '401', note: 'Distinct venues across the listing' },
      ]} />
      <div className="mt-[7px]">
        <Stats items={[
          { label: 'Cinematik mailing list', value: '65,886', extra: '65,710 contactable', note: 'Opt-in consumer audience for campaign comms' },
          { label: 'elevenfiftyfive mailing list', value: '1,661', extra: '1,657 contactable', note: 'Opt-in audience for this project' },
        ]} />
      </div>
    </section>

    <section>
      <Heading color="amber" title="Ad Campaigns" sub="Paid Meta and Google performance, grouped by campaign objective." />
      <SubHeading title="Awareness & Reach" sub="Brand awareness campaigns optimised for reach and impressions." />
      <Stats wide items={[
        { label: 'Reach', value: '1,200,000', note: 'People reached by these campaigns' },
        { label: 'Impressions', value: '4,800,000', note: 'Total times ads were shown' },
        { label: 'Frequency', value: '4.0', note: 'Average impressions per person' },
        { label: 'Ad spend', value: '£14,520', note: 'Total client cost' },
      ]} />
      <SubHeading title="Traffic" sub="Campaigns optimised for clicks through to the listing." />
      <Stats items={[
        { label: 'Reach', value: '470,000', note: 'People reached by these campaigns' },
        { label: 'Impressions', value: '1,350,000', note: 'Total times ads were shown' },
        { label: 'Clicks', value: '74,000', note: 'Total ad clicks' },
        { label: 'CTR', value: '5.48%', note: 'Click-through rate (clicks ÷ impressions)' },
        { label: 'Ad spend', value: '£12,980', note: 'Total client cost' },
      ]} />
      <SubHeading title="Conversions" sub="Campaigns optimised for ticket sales." />
      <Stats wide items={[
        { label: 'Conversions', value: '6,240', note: 'Purchases attributed to these campaigns' },
        { label: 'Conversion rate', value: '14.51%', note: 'Conversions ÷ clicks' },
        { label: 'Cost / conversion', value: '£2', note: 'Average client cost per conversion' },
        { label: 'Ad spend', value: '£10,010', note: 'Total client cost' },
      ]} />
      <button className="mt-[10px] block h-[21px] rounded-[4px] bg-[#d97706] px-[10px] text-[8px] font-medium text-white">Discuss a new campaign</button>
    </section>

    <section>
      <Heading color="violet" title="Conversion Funnel" sub="How visitors progressed from landing through to checkout." />
      <FunnelChart />
    </section>

    <section>
      <Heading color="teal" title="Performance over time" sub="Daily booking clicks and sessions, with the events we know about marked (publish, campaign launches)." />
      <PerformanceChart />
    </section>

    <section>
      <Heading color="sky" title="Screenings & venues over time" sub="Scheduled external screenings and distinct venues across the run window." />
      <ScreeningsChart />
    </section>

    <section>
      <Heading color="sky" title="Audience Demographics" sub="Age and region of the opt-in mailing-list audience (subscribers with known details)." />
      <div className="mt-[7px] grid grid-cols-2 gap-[15px]">
        <DataTable
          head={['Age band', 'Subscribers', 'Share']}
          widths={['', 'w-[98px]']}
          rows={[
            ['16-19', '1,288', '5.4%'], ['20-24', '1,864', '7.9%'], ['25-30', '2,815', '11.9%'],
            ['31-34', '1,524', '6.4%'], ['35-39', '1,915', '8.1%'], ['40-49', '4,300', '18.1%'],
            ['50-59', '5,203', '21.9%'], ['60-69', '3,539', '14.9%'], ['70+', '1,289', '5.4%'],
          ]}
          note="Based on 23,737 subscribers with a known birth date."
        />
        <DataTable
          head={['Region (postcode area)', 'Subscribers']}
          rows={[['B', '2,140'], ['E', '1,683'], ['NG', '1,452'], ['SE', '1,427'], ['N', '1,374'], ['G', '1,221'], ['S', '1,216'], ['M', '1,193']]}
        />
      </div>
    </section>

    <section>
      <Heading color="sky" title="Sessions by Location" sub="Where engaged sessions came from, by country and town/city (from visitor IP)." />
      <div className="mt-[7px] grid grid-cols-3 gap-[15px]">
        <div className="col-span-2 flex justify-center pl-[6px]"><WorldMap /></div>
        <DataTable
          head={['Top towns / cities by sessions', 'Sessions']}
          rows={[['London', '11,330'], ['Edinburgh', '2,026'], ['Birmingham', '1,522'], ['London', '1,372'], ['Manchester', '1,340']]}
          more="Show all 258 towns/cities"
        />
      </div>
    </section>

    <section>
      <Heading color="violet" title="Site Engagement" sub="Visits across this listing and its screening pages, and how visitors engaged." />
      <div className="mt-[7px]">
        <Stats wide items={[
          { label: 'Sessions', value: '92,086', note: 'Engaged visits across the listing and screening pages', info: true },
          { label: 'Total users', value: '47,835', note: 'Distinct people across those sessions', info: true },
          { label: 'Sessions that clicked', value: '73.34%', note: 'Share of engaged sessions that clicked through to book', info: true },
          { label: 'Social shares', value: '1,433', note: 'Shares started from engaged sessions', info: true },
        ]} />
      </div>
    </section>

    <section>
      <Heading color="teal" title="Traffic & Click Throughs" />
      <div className="mt-[7px]">
        <Stats items={[
          { label: 'Page views', value: '98,508', note: 'Views of the event listing page only', info: true },
          { label: 'Unique visitors', value: '44,436', note: 'Distinct visitors to the listing page', info: true },
          { label: 'Total click throughs', value: '168,064', note: 'Book-link clicks across listing and screening pages', info: true },
          { label: 'Unique click throughs', value: '67,540', note: 'Distinct sessions with a booking click', info: true },
        ]} />
      </div>
    </section>

    <section>
      <Heading color="teal" title="Booking Clicks by Source" sub="Which channels and campaigns actually drove booking click-throughs (attributed to the driving session's landing source)." />
      <div className="mt-[7px] grid grid-cols-2 gap-[15px]">
        <DataTable
          head={['Channel', 'Booking clicks']}
          rows={[['Paid', '75,467'], ['Email', '33,466'], ['Organic', '25,194'], ['Social', '13,575'], ['Referral', '11,873'], ['Direct', '8,489']]}
        />
        <DataTable
          head={['Campaign', 'Booking clicks']}
          rows={[['backrooms-meta-awareness', '50,507'], ['backrooms-launch-newsletter', '33,466'], ['backrooms-google-conversions', '24,960'], ['backrooms-social-organic', '13,575']]}
        />
      </div>
    </section>

    <section>
      <Heading color="teal" title="Click-throughs across the UK" sub="Where booking click-throughs came from — intensity scales with click-throughs volume per area." />
      <UkMap />
    </section>

    <div>
      <div className="grid grid-cols-2 gap-[15px]">
        <section>
          <Heading color="violet" title="Traffic Mix" sub="How visitors reached this listing — organic search and direct traffic come from our SEO footprint." />
          <Donut ends={[158, 232.5, 287.3, 315.5, 341.5, 360]} labels={['Paid', 'Email', 'Organic', 'Social', 'Referral', 'Direct']} />
        </section>
        <section>
          <Heading color="violet" title="Sessions by Device" sub="Split of engaged sessions across mobile, desktop and tablet." />
          <Donut ends={[216, 331.6, 360]} labels={['Mobile', 'Desktop', 'Tablet', 'Other']} />
        </section>
      </div>
      <div className="mt-[19px] grid grid-cols-2 gap-[15px]">
        <DataTable head={['Site events', 'Count']} rows={[['Ticket Click', '168,064'], ['Social Share', '1,433'], ['Showtime Click', '143'], ['Press Download', '13']]} />
        <DataTable head={['Top pages', 'Views']} rows={[['Event Listing', '5,192'], ['Booking Page', '575'], ['Press', '460']]} />
      </div>
    </div>

    <div className="grid grid-cols-2 gap-[15px]">
      <section className="flex flex-col gap-[7px] *:self-auto">
        <Heading color="sky" title="Top Cities by Venue Coverage" />
        <DataTable
          head={['City', 'Venues']}
          rows={[['London', 50], ['Edinburgh', 9], ['Birmingham', 7], ['London', 6], ['Manchester', 6], ['England', 5], ['Leeds', 5], ['Glasgow', 5], ['Sheffield', 5], ['Bristol', 5]]}
          more="Show all 258 cities"
        />
      </section>
      <section className="flex flex-col gap-[7px] *:self-auto">
        <Heading color="sky" title="Screenings by Chain" />
        <DataTable
          head={['Chain', 'Screenings', 'Venues', 'Click throughs']}
          widths={['', 'w-[61px]', 'w-[110px]']}
          rows={[
            ['Vue', '1,436', 63, '40,363'], ['Cineworld', '1,363', 76, '36,089'], ['ODEON Cinemas', '1,117', 69, '30,548'],
            ['Everyman', 446, 41, '13,174'], ['Omniplex Cinemas', 290, 17, '8,228'], ['Picturehouse Cinemas', 268, 21, '6,651'],
            ['The Light', 189, 14, '5,456'], ['Showcase', 157, 16, '3,903'], ['Curzon Cinemas Limited', 99, 9, '2,224'],
            ['Reel Cinemas Limited', 79, 12, '2,269'],
          ]}
          more="Show all 62 chains"
        />
      </section>
    </div>
  </div>
)

export default function App() {
  return (
    <div className="flex min-h-screen bg-[#0f0f11] font-['Inter',sans-serif] text-zinc-50">
      <Sidebar />
      <div className="min-w-0 flex-1">
        <header className="flex h-[35px] items-center gap-2 border-b border-[#2e2e33] px-[15px]">
          <span className="text-[8px] text-zinc-400">Admin</span>
          <Pill>development</Pill>
          <button aria-label="Toggle theme" className="mr-[6px] ml-auto"><Sun className="size-[10px]" /></button>
        </header>
        <main className="px-[15px] pt-[21px] pb-[52px]">
          <div className="flex gap-[5px] border-b border-[#2e2e33] pb-[8px]">
            {ACTIONS.map(([label, Glyph]) => (
              <button
                key={label}
                disabled={label === 'Box Office Report'}
                className={clsx(
                  'flex h-[20px] items-center gap-2 rounded-[4px] border border-[#27272a] px-2 text-[7px] font-medium whitespace-nowrap disabled:opacity-50',
                  label === 'Stats' && 'bg-[#2e2e33]',
                )}
              >
                <Glyph className="size-[11px]" />
                {label}
              </button>
            ))}
          </div>
          <div className="px-[9px]">
            <p className="pt-[9px] text-[8px] leading-[12px] text-zinc-400">elevenfiftyfive</p>
            <div className="flex h-[25px] items-center gap-2">
              <h1 className="text-[14px] font-semibold">BACKROOMS</h1>
              <Pill>Published</Pill>
            </div>
            <p className="text-[8px] leading-[13px] text-zinc-400">Screening on 19 Jul - 16 Aug 2026</p>
            <div className="flex items-center justify-end gap-2 pt-[24px] text-[7px] leading-[10px] text-zinc-400">
              <span>Last updated: 1 minute ago</span>
              <span className="flex items-center gap-1">
                <svg viewBox="0 0 8 8" className="size-[8px]"><path d="M1 5C2 8 6 8 7 5" fill="none" stroke="#e4e4e7" strokeWidth="1.2" /></svg>
                Rebuilding...
              </span>
            </div>
            <div role="tablist" className="mb-[22px] flex h-[22px] w-fit items-center gap-1 rounded-[5px] bg-[#27272a] p-[3px] text-[8px] font-medium text-zinc-400">
              {TABS.map((t) => (
                <button key={t} role="tab" aria-selected={t === 'Reach'} className="h-[17px] rounded-[4px] px-[7px] aria-selected:bg-[#0e0e10] aria-selected:text-zinc-50">{t}</button>
              ))}
            </div>
            <Reach />
          </div>
        </main>
      </div>
    </div>
  )
}
